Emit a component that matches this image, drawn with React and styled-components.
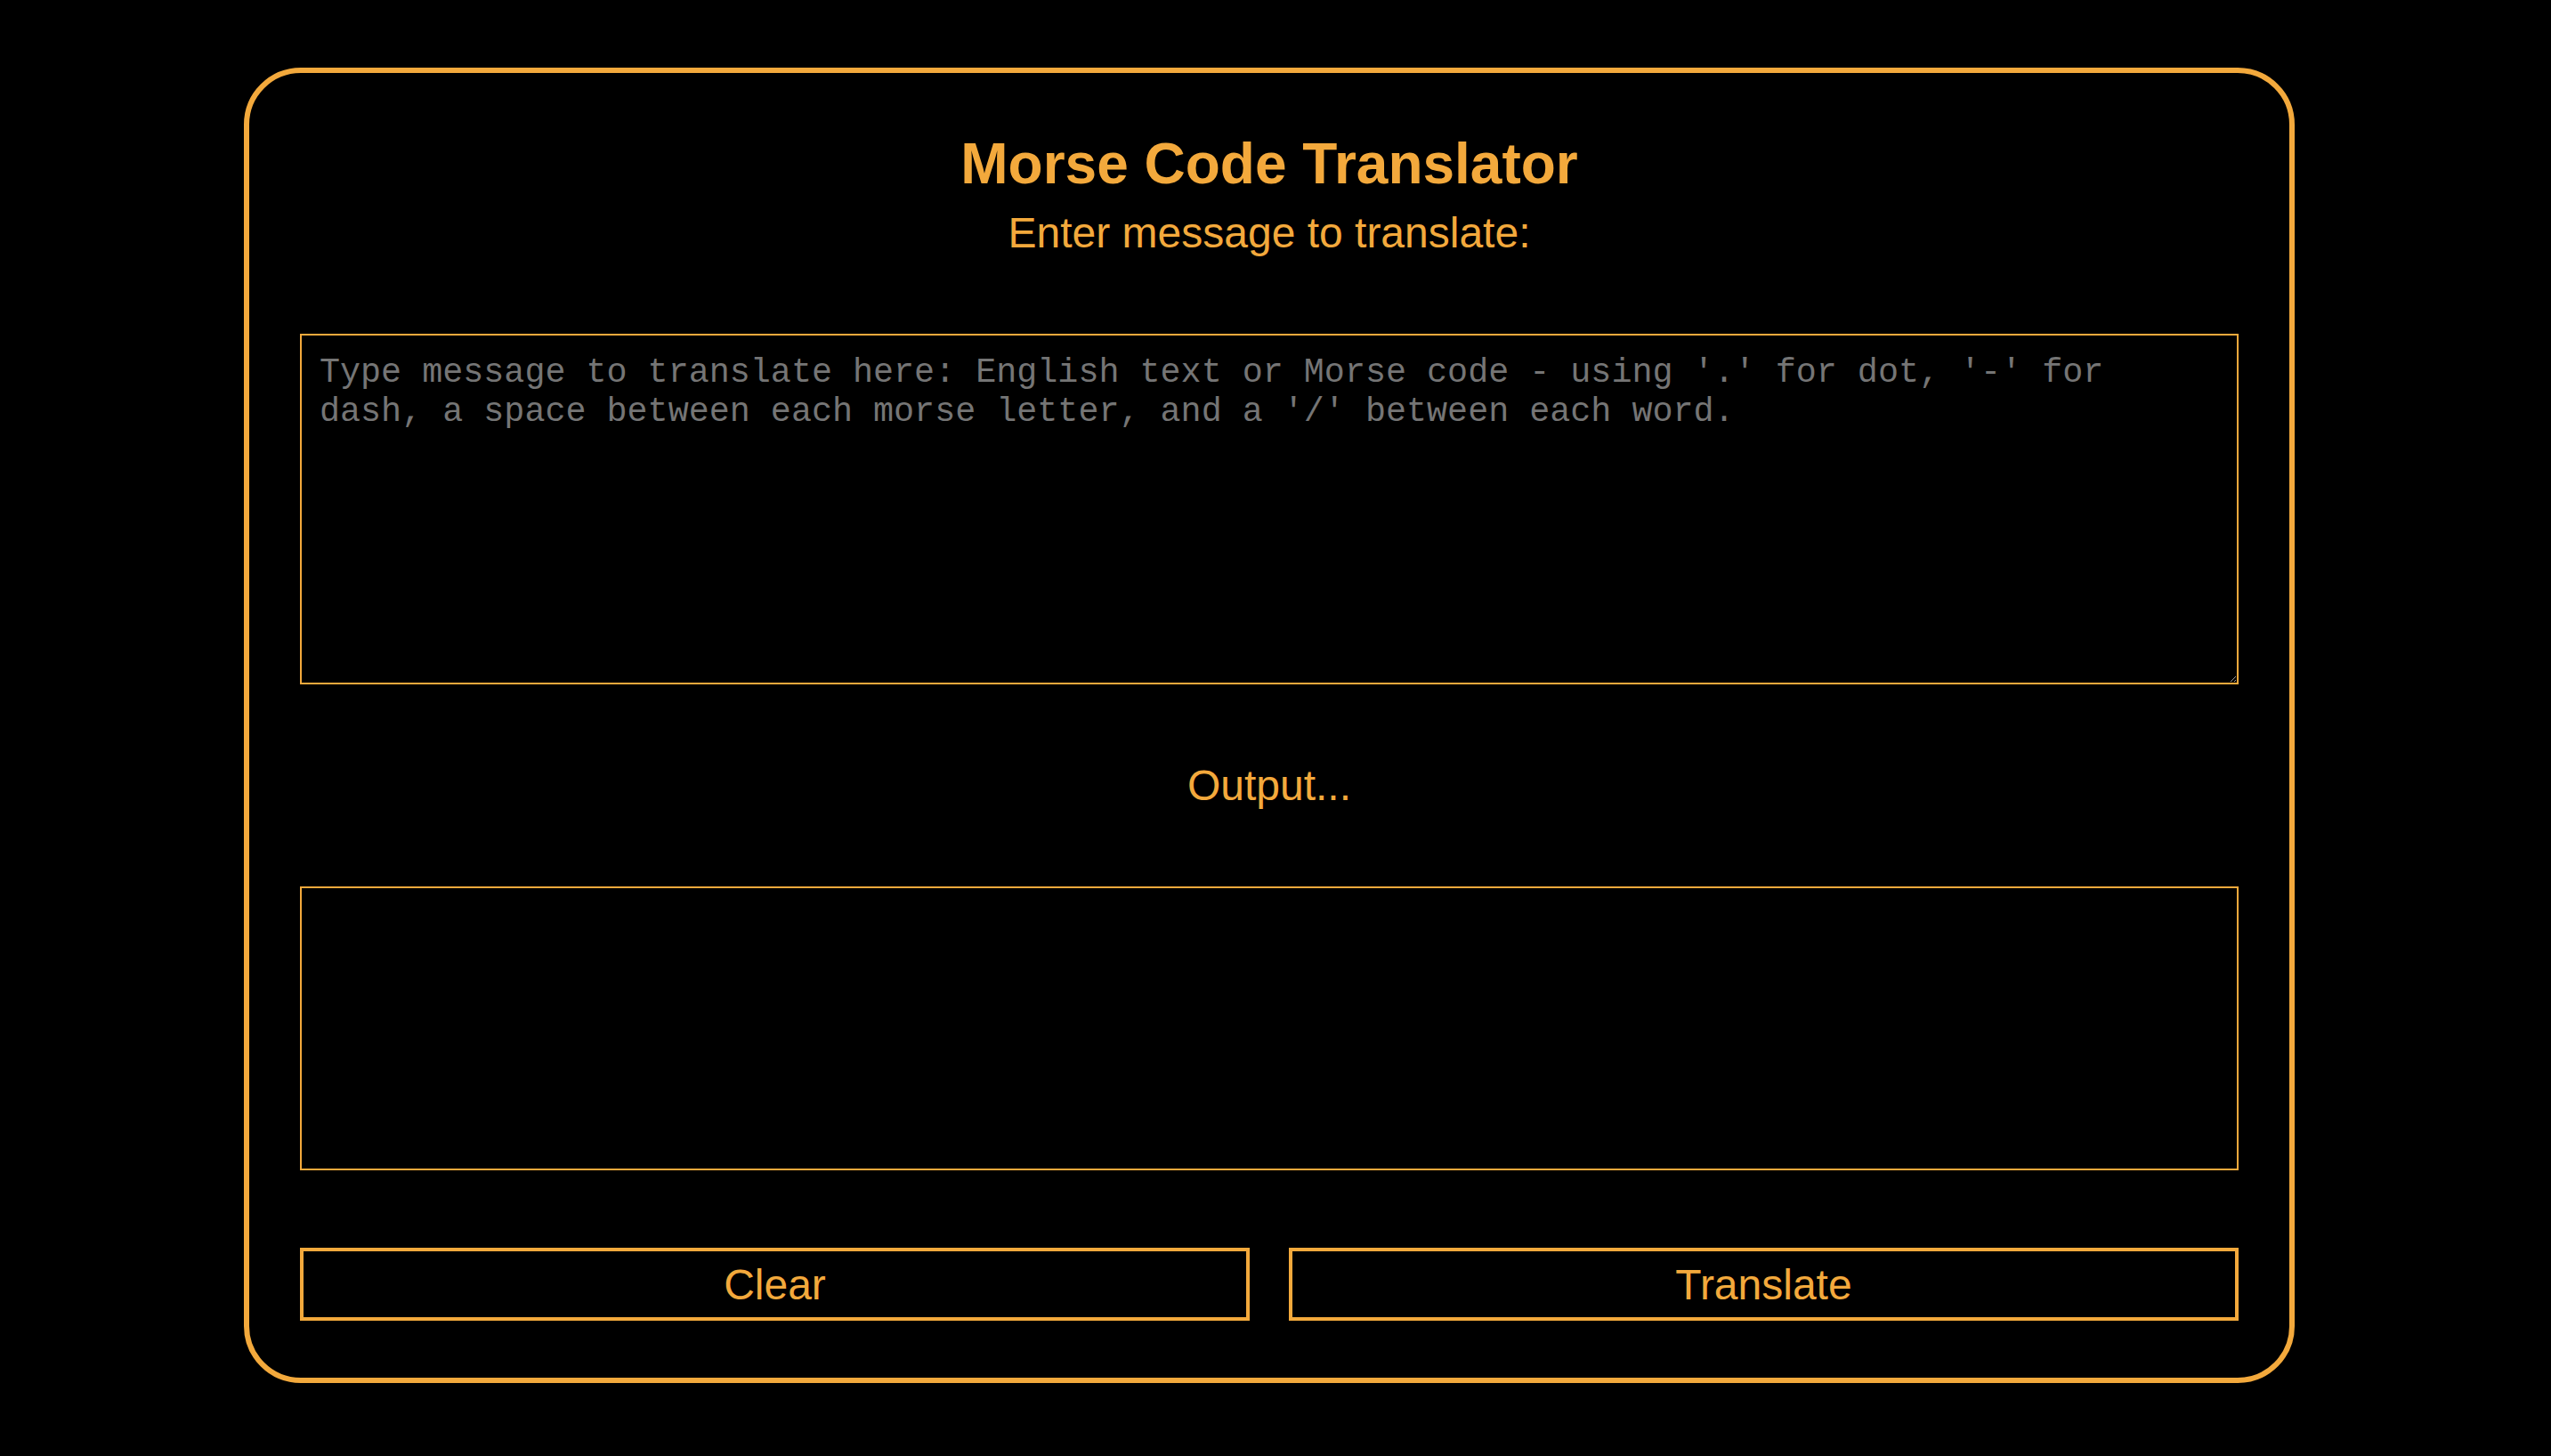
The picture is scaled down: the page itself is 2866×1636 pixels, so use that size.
import React, { useState } from "react";
import styled, { createGlobalStyle } from "styled-components";

const ORANGE = "#f3a93c";

const GlobalStyle = createGlobalStyle`
    html, body {
        margin: 0;
        padding: 0;
        background: #000;
    }
    #root {
        min-height: 100vh;
    }
`;

const Page = styled.div`
    padding-top: 76px;
    padding-left: 274px;
    font-family: 'Liberation Sans', Arial, sans-serif;
`;

const Card = styled.div`
    box-sizing: border-box;
    width: 2304px;
    height: 1478px;
    border: 6px solid ${ORANGE};
    border-radius: 64px;
    padding: 65px 57px 0;
    display: flex;
    flex-direction: column;
    align-items: stretch;
`;

const Title = styled.h1`
    margin: 0;
    font-size: 64px;
    font-weight: 700;
    color: ${ORANGE};
    text-align: center;
    line-height: normal;
`;

const Label = styled.div`
    font-size: 48px;
    color: ${ORANGE};
    text-align: center;
    line-height: normal;
    margin-top: ${(props) => props.top || 0}px;
`;

const Input = styled.textarea`
    box-sizing: border-box;
    display: block;
    width: 100%;
    height: 394px;
    margin-top: 86px;
    padding: 20px;
    background: #000;
    color: ${ORANGE};
    border: 2px solid ${ORANGE};
    border-radius: 0;
    font-family: 'Liberation Mono', 'Courier New', monospace;
    font-size: 38.4px;
    line-height: normal;
    outline: none;

    &::placeholder {
        color: #757575;
    }
`;

const Output = styled.div`
    box-sizing: border-box;
    width: 100%;
    height: 319px;
    margin-top: 86px;
    padding: 20px;
    border: 2px solid ${ORANGE};
    color: ${ORANGE};
    font-family: 'Liberation Mono', 'Courier New', monospace;
    font-size: 38.4px;
    white-space: pre-wrap;
    word-break: break-word;
`;

const ButtonRow = styled.div`
    display: grid;
    grid-template-columns: 1fr 1fr;
    gap: 44px;
    margin-top: 87px;
`;

const Button = styled.button`
    box-sizing: border-box;
    height: 82px;
    background: #000;
    color: ${ORANGE};
    border: 4px solid ${ORANGE};
    border-radius: 0;
    font-family: 'Liberation Sans', Arial, sans-serif;
    font-size: 48px;
    cursor: pointer;
    padding: 0;
`;

const MORSE = {
    a: ".-", b: "-...", c: "-.-.", d: "-..", e: ".", f: "..-.", g: "--.", h: "....",
    i: "..", j: ".---", k: "-.-", l: ".-..", m: "--", n: "-.", o: "---", p: ".--.",
    q: "--.-", r: ".-.", s: "...", t: "-", u: "..-", v: "...-", w: ".--", x: "-..-",
    y: "-.--", z: "--..", 0: "-----", 1: ".----", 2: "..---", 3: "...--", 4: "....-",
    5: ".....", 6: "-....", 7: "--...", 8: "---..", 9: "----.",
};

const REVERSE = Object.fromEntries(Object.entries(MORSE).map(([k, v]) => [v, k]));

const translate = (text) => {
    const trimmed = text.trim();
    if (!trimmed) return "";
    if (/^[.\-\s/]+$/.test(trimmed)) {
        return trimmed
            .split("/")
            .map((word) => word.trim().split(/\s+/).map((c) => REVERSE[c] || "").join(""))
            .join(" ");
    }
    return trimmed
        .toLowerCase()
        .split(/\s+/)
        .map((word) => word.split("").map((c) => MORSE[c]).filter(Boolean).join(" "))
        .join(" / ");
};

function App() {
    const [message, setMessage] = useState("");
    const [result, setResult] = useState("");

    return (
        <Page>
            <GlobalStyle />
            <Card>
                <Title>Morse Code Translator</Title>
                <Label top={13}>Enter message to translate:</Label>
                <Input
                    value={message}
                    onChange={(e) => setMessage(e.target.value)}
                    placeholder="Type message to translate here: English text or Morse code - using '.' for dot, '-' for dash, a space between each morse letter, and a '/' between each word."
                />
                <Label top={86}>Output...</Label>
                <Output>{result}</Output>
                <ButtonRow>
                    <Button onClick={() => { setMessage(""); setResult(""); }}>Clear</Button>
                    <Button onClick={() => setResult(translate(message))}>Translate</Button>
                </ButtonRow>
            </Card>
        </Page>
    );
}

export default App;
